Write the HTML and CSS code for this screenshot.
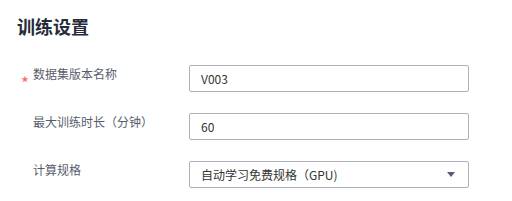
FILE: index.html
```html
<!DOCTYPE html>
<html lang="zh">
<head>
  <meta charset="UTF-8" />
  <title>训练设置</title>
  <link rel="stylesheet" href="styles.css">
</head>
<body>

  <div class="panel">
    <h3 class="title">训练设置</h3>

    <div class="form">
      <div class="row">
        <label class="label required">数据集版本名称</label>
        <input class="field" type="text" value="V003" />
      </div>

      <div class="row">
        <label class="label">最大训练时长（分钟）</label>
        <input class="field" type="text" value="60" />
      </div>

      <div class="row">
        <label class="label">计算规格</label>
        <div class="field select">
          <span>自动学习免费规格（GPU)</span>
          <svg class="caret" width="8" height="5" viewBox="0 0 8 5">
            <path d="M0 0 H8 L4 5 Z" fill="#575d6c" />
          </svg>
        </div>
      </div>
    </div>
  </div>

</body>
</html>
```

FILE: styles.css
```css
* {
  box-sizing: border-box;
}

body {
  margin: 0;
  background-color: #fff;
  font-family: 'Noto Sans CJK SC', 'Noto Sans', sans-serif;
}

.panel {
  padding: 13px 17px 0;
}

.title {
  margin: 0;
  font-size: 18px;
  line-height: 26px;
  font-weight: bold;
  color: #252b3a;
}

.form {
  margin-top: 26px;
  display: flex;
  flex-direction: column;
  gap: 21px;
}

.row {
  display: flex;
  align-items: flex-start;
}

.label {
  position: relative;
  width: 172px;
  padding-left: 16px;
  font-size: 12px;
  line-height: 18px;
  color: #575d6c;
}

.required::before {
  content: '*';
  position: absolute;
  left: 4px;
  top: 10px;
  color: #f66;
  font-size: 17px;
  line-height: 15px;
}

.field {
  width: 280px;
  height: 27px;
  padding: 0 11px;
  border: 1px solid #adb0b8;
  border-radius: 2px;
  font-family: inherit;
  font-size: 12px;
  color: #333;
  background: #fff;
  outline: none;
}

.select {
  display: flex;
  align-items: center;
  justify-content: space-between;
  padding-right: 13px;
}

.caret {
  display: block;
}
```
